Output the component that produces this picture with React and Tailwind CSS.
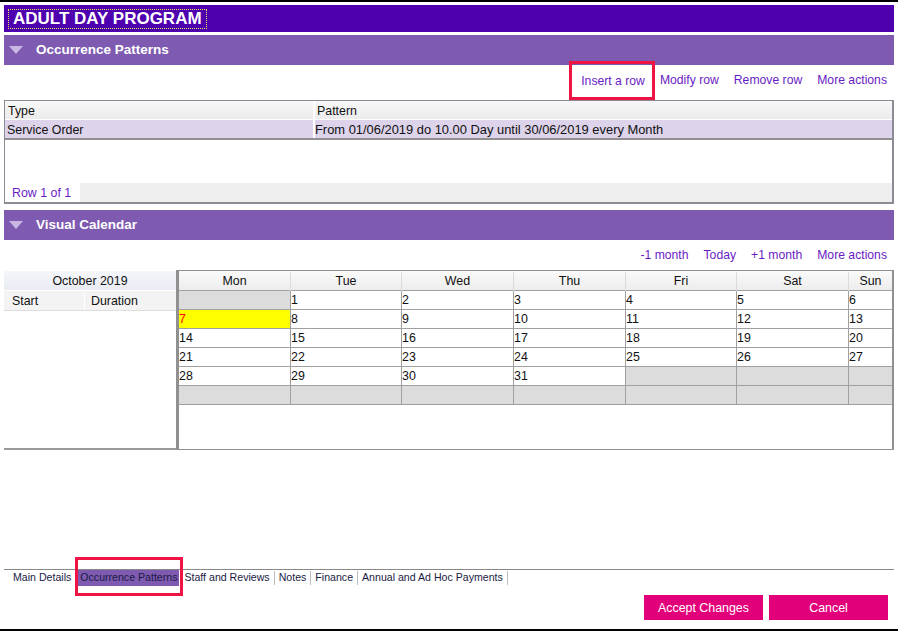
import React from "react";

const LINK = "text-[#6a1cc4] text-[12.2px] leading-[14px] whitespace-nowrap";

function SectionHeader({ title }) {
  return (
    <div className="h-[30px] bg-[#7e5bb0] flex items-center">
      <svg width="14" height="8" viewBox="0 0 14 8" className="ml-[5px] mr-[13px]">
        <polygon points="0,0 14,0 7,8" fill="#c9b6e4" />
      </svg>
      <span className="text-white font-bold text-[13.5px] leading-none">{title}</span>
    </div>
  );
}

const weeks = [
  [null, 1, 2, 3, 4, 5, 6],
  [7, 8, 9, 10, 11, 12, 13],
  [14, 15, 16, 17, 18, 19, 20],
  [21, 22, 23, 24, 25, 26, 27],
  [28, 29, 30, 31, null, null, null],
  [null, null, null, null, null, null, null],
];
const days = ["Mon", "Tue", "Wed", "Thu", "Fri", "Sat", "Sun"];

export default function App() {
  return (
    <div className="w-[898px] h-[631px] bg-white flex flex-col overflow-hidden font-['Liberation_Sans',Arial,sans-serif] text-[#111]">
      <div className="h-[2px] bg-black shrink-0" />
      <div className="px-[4px] flex flex-col flex-1">
        {/* Title bar */}
        <div className="mt-[3px] h-[27px] bg-[#4f00ae] flex items-center pl-[5px]">
          <span className="outline-1 outline-dotted outline-[#e6e35a] px-[4px] h-[18px] flex items-center text-white font-bold text-[17px] leading-none">
            ADULT DAY PROGRAM
          </span>
        </div>

        <div className="mt-[3px]">
          <SectionHeader title="Occurrence Patterns" />
        </div>

        {/* Actions */}
        <div className="h-[35px] flex items-center justify-end gap-[15px] pr-[7px] pb-[5px]">
          <span className="relative">
            <span className={LINK}>Insert a row</span>
            <span className="absolute left-[-12px] right-[-10px] top-[-7px] bottom-[-8px] border-[3px] border-[#ee1544]" />
          </span>
          <span className={LINK}>Modify row</span>
          <span className={LINK}>Remove row</span>
          <span className={LINK}>More actions</span>
        </div>

        {/* Table */}
        <div className="h-[104px] border-l border-t border-r-2 border-b-2 border-[#8c8a94] flex flex-col text-[12.4px]">
          <div className="h-[19px] flex bg-gradient-to-b from-[#f8f8f8] to-[#ebebeb] border-b border-white">
            <div className="w-[310px] border-r-2 border-white pl-[3px] pt-[2px] flex items-center">Type</div>
            <div className="flex-1 pl-[2px] pt-[2px] flex items-center">Pattern</div>
          </div>
          <div className="h-[20px] flex bg-[#ddd3ea] border-b-2 border-[#8f8f8f]">
            <div className="w-[310px] border-r-2 border-white pl-[2px] pt-[2px] flex items-center">Service Order</div>
            <div className="flex-1 pl-[0px] pt-[2px] flex items-center text-[12.9px]">From 01/06/2019 do 10.00 Day until 30/06/2019 every Month</div>
          </div>
          <div className="flex-1" />
          <div className="h-[19px] flex">
            <div className="w-[75px] bg-white pl-[7px] pt-[1px] flex items-center text-[#6a1cc4]">Row 1 of 1</div>
            <div className="flex-1 bg-[#efefef]" />
          </div>
        </div>

        <div className="mt-[6px]">
          <SectionHeader title="Visual Calendar" />
        </div>

        <div className="h-[30px] flex items-center justify-end gap-[15px] pr-[7px]">
          <span className={LINK}>-1 month</span>
          <span className={LINK}>Today</span>
          <span className={LINK}>+1 month</span>
          <span className={LINK}>More actions</span>
        </div>

        {/* Calendar */}
        <div className="h-[180px] flex text-[12.4px]">
          <div className="w-[172px] flex flex-col border-b-2 border-[#9a9a9a] pt-[1px]">
            <div className="h-[19px] pt-[1px] bg-gradient-to-b from-[#f4f6fa] to-[#e9ecf2] flex items-center justify-center">October 2019</div>
            <div className="h-[20px] pt-[1px] bg-[#f3f3f3] border-b border-[#dddddd] flex mt-[1px]">
              <div className="w-[81px] border-r border-white pl-[8px] flex items-center">Start</div>
              <div className="flex-1 pl-[6px] flex items-center">Duration</div>
            </div>
          </div>
          <div className="flex-1 border-l-[3px] border-t border-r-2 border-b border-[#909090] flex flex-col">
            <div className="h-[20px] pt-[1px] grid grid-cols-[112px_111px_112px_112px_111px_112px_1fr] bg-gradient-to-b from-[#fafafa] to-[#ededed] border-b border-[#a0a0a0]">
              {days.map((d, i) => (
                <div key={d} className={"flex items-center justify-center " + (i < 6 ? "border-r border-[#dcdcdc]" : "")}>
                  {d}
                </div>
              ))}
            </div>
            {weeks.map((w, ri) => (
              <div key={ri} className="h-[19px] grid grid-cols-[112px_111px_112px_112px_111px_112px_1fr] border-b border-[#a0a0a0]">
                {w.map((n, ci) => {
                  const bg = n === null ? "bg-[#dcdcdc]" : n === 7 ? "bg-[#ffff00]" : "bg-white";
                  const col = n === 7 ? "text-[#ff0000]" : "text-[#111]";
                  return (
                    <div key={ci} className={`${bg} ${col} ${ci < 6 ? "border-r border-[#a0a0a0]" : ""} flex items-center leading-none`}>
                      {n}
                    </div>
                  );
                })}
              </div>
            ))}
          </div>
        </div>

        {/* Bottom */}
        <div className="mt-auto">
          <div className="border-t border-[#888] h-[17px] flex items-center pl-[9px] text-[10.6px] text-[#1a1a44]">
            <span className="mr-[7px]">Main Details</span>
            <span className="relative bg-[#7e5bb0] h-[16px] px-[2px] flex items-center">
              Occurrence Patterns
              <span className="absolute left-[-3px] right-[-4px] top-[-13px] bottom-[-10px] border-[3px] border-[#ee1544]" />
            </span>
            <span className="w-px h-[14px] bg-[#bdbdbd] ml-[1px] mr-[3px]" />
            <span>Staff and Reviews</span>
            <span className="w-px h-[14px] bg-[#bdbdbd] mx-[4px]" />
            <span>Notes</span>
            <span className="w-px h-[14px] bg-[#bdbdbd] mx-[4px]" />
            <span>Finance</span>
            <span className="w-px h-[14px] bg-[#bdbdbd] mx-[4px]" />
            <span>Annual and Ad Hoc Payments</span>
            <span className="w-px h-[14px] bg-[#bdbdbd] mx-[4px]" />
          </div>
          <div className="mt-[9px] mb-[9px] flex justify-end gap-[6px] pr-[6px]">
            <div className="w-[119px] h-[25px] pt-[1px] bg-[#e2007a] text-white text-[12.4px] flex items-center justify-center">Accept Changes</div>
            <div className="w-[119px] h-[25px] pt-[1px] bg-[#e2007a] text-white text-[12.4px] flex items-center justify-center">Cancel</div>
          </div>
        </div>
      </div>
      <div className="h-[2px] bg-black shrink-0" />
    </div>
  );
}
